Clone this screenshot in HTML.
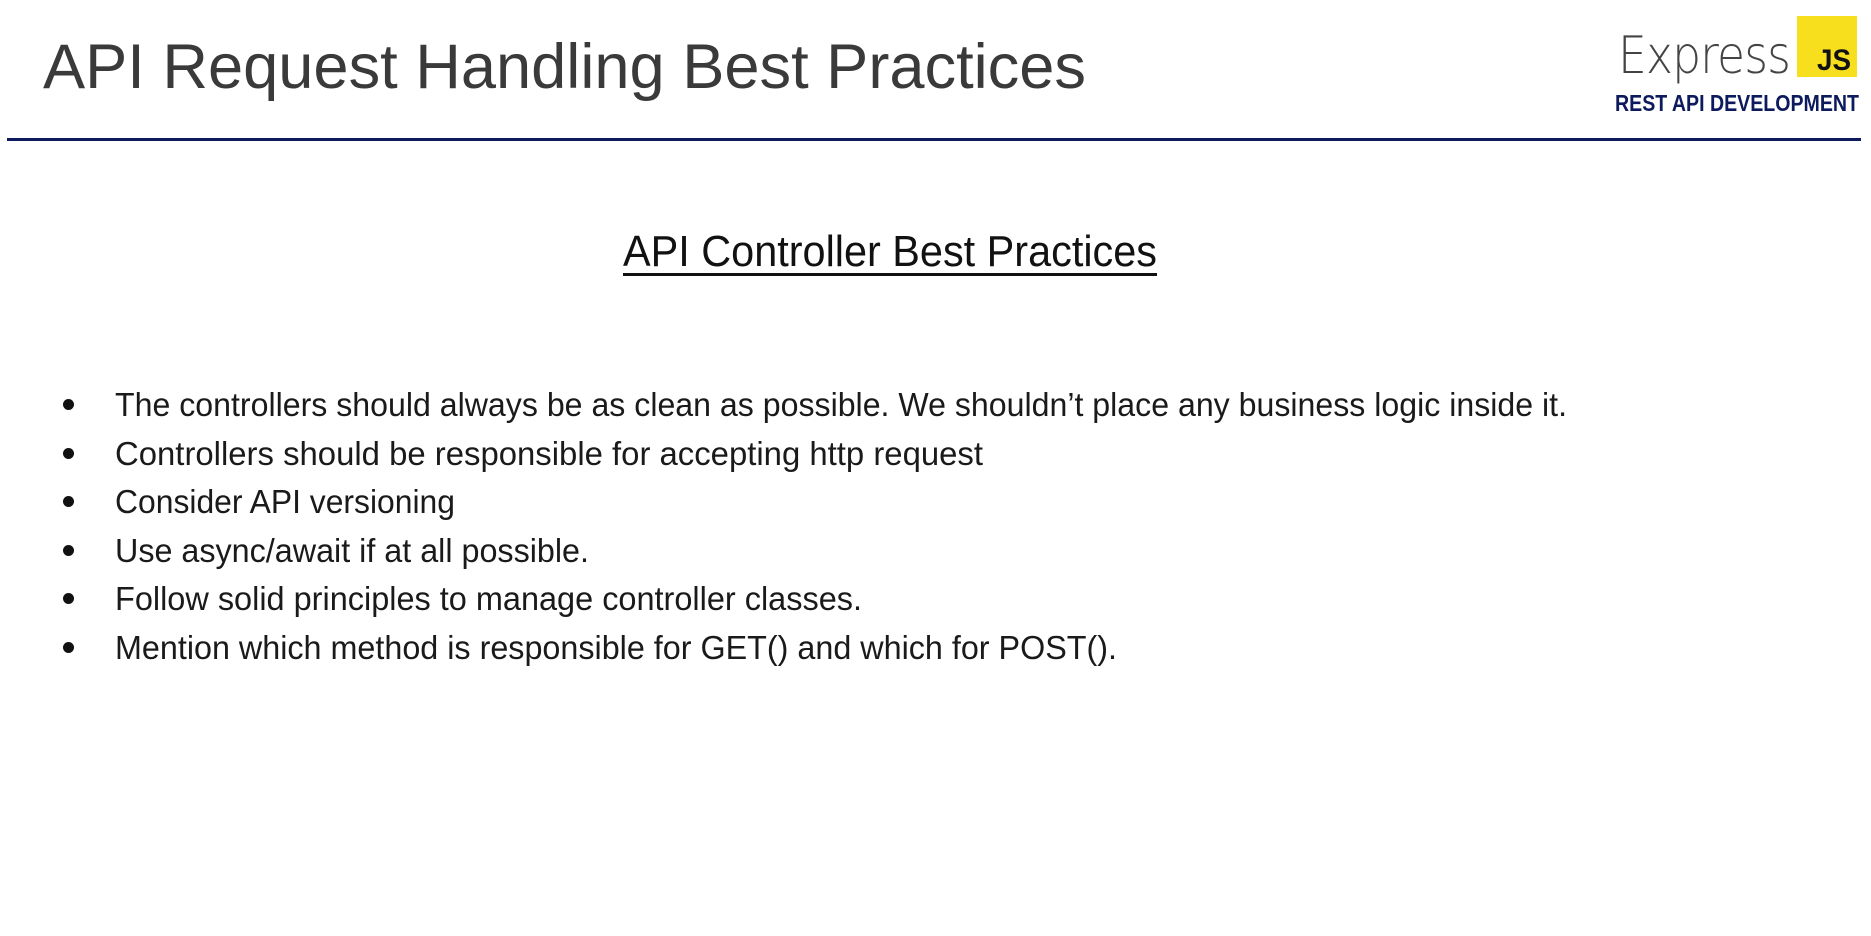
<!DOCTYPE html>
<html><head><meta charset="utf-8"><style>
body{margin:0;width:1871px;height:936px;background:#fff;position:relative;overflow:hidden;font-family:"Liberation Sans",sans-serif}
.a{position:absolute;white-space:nowrap;transform-origin:0 0;line-height:1}
#title{left:43px;top:36px;font-size:63px;color:#3a3a3a}
#rule{position:absolute;left:7px;top:138px;width:1854px;height:3px;background:#0d1b5e}
#exp{left:1618px;top:30px;font-size:52px;color:#444;font-family:"DejaVu Sans","Liberation Sans",sans-serif;font-weight:200;letter-spacing:-1px}
#js{position:absolute;left:1797px;top:16px;width:60px;height:61px;background:#f7df1e}
#jst{left:1817px;top:46px;font-size:30px;font-weight:bold;color:#111}
#rest{left:1615px;top:92px;font-size:23px;font-weight:bold;color:#0d1b5e}
#sub{left:623px;top:230px;font-size:44px;color:#111}
#subu{position:absolute;left:623px;top:273px;width:534px;height:3px;background:#111}
.b{position:absolute;left:63px;width:11px;height:11px;border-radius:50%;background:#111}
.t{left:115px;font-size:33px;color:#1a1a1a}
</style></head><body>
<div class="a" id="title" data-w="1043">API Request Handling Best Practices</div>
<div id="rule"></div>
<div class="a" id="exp" data-w="172">Express</div>
<div id="js"></div>
<div class="a" id="jst" data-w="34">JS</div>
<div class="a" id="rest" data-w="244">REST API DEVELOPMENT</div>
<div class="a" id="sub" data-w="534">API Controller Best Practices</div>
<div id="subu"></div>

<div class="b" style="top:399px"></div>
<div class="a t" style="top:388px" data-w="1452">The controllers should always be as clean as possible. We shouldn’t place any business logic inside it.</div>
<div class="b" style="top:448px"></div>
<div class="a t" style="top:437px" data-w="868">Controllers should be responsible for accepting http request</div>
<div class="b" style="top:496px"></div>
<div class="a t" style="top:485px" data-w="340">Consider API versioning</div>
<div class="b" style="top:545px"></div>
<div class="a t" style="top:534px" data-w="474">Use async/await if at all possible.</div>
<div class="b" style="top:593px"></div>
<div class="a t" style="top:582px" data-w="747">Follow solid principles to manage controller classes.</div>
<div class="b" style="top:642px"></div>
<div class="a t" style="top:631px" data-w="1002">Mention which method is responsible for GET() and which for POST().</div>
<script>
document.querySelectorAll('[data-w]').forEach(function(e){
  var w=e.getBoundingClientRect().width, t=+e.getAttribute('data-w');
  if(w>0) e.style.transform='scaleX('+(t/w)+')';
});
</script>
</body></html>
